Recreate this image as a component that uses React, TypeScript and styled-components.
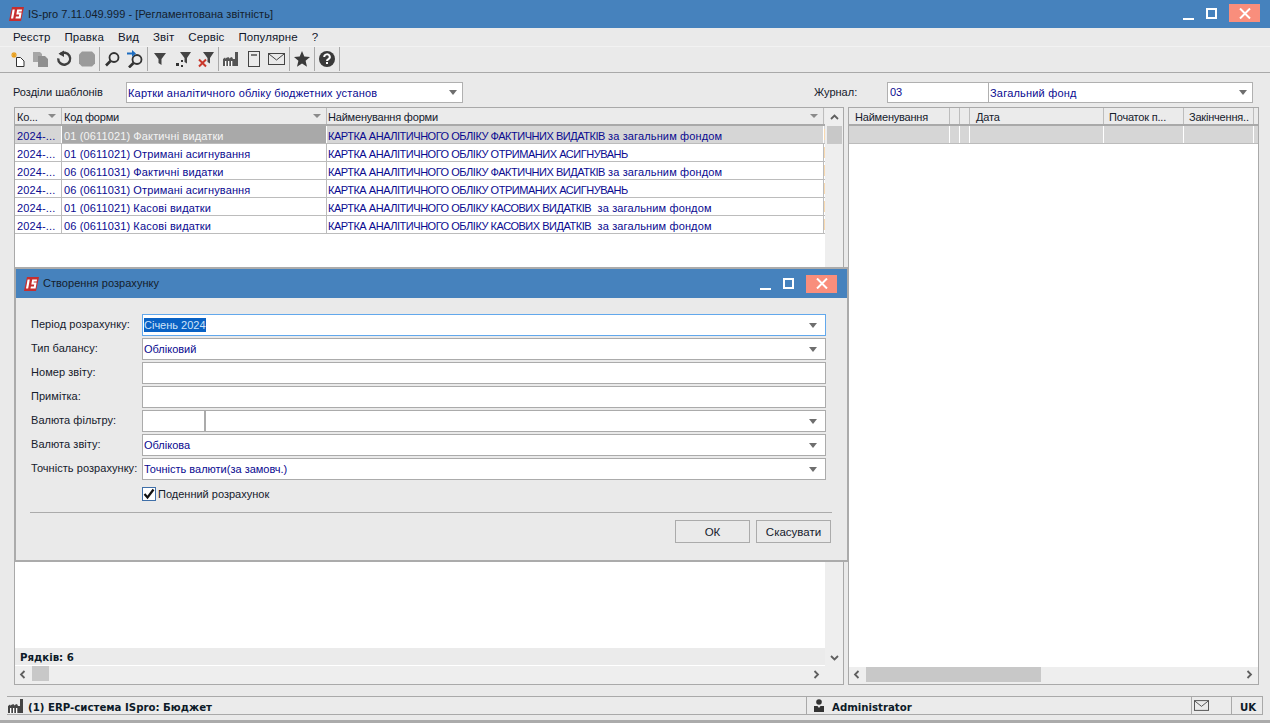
import React from 'react';
import styled, { createGlobalStyle } from 'styled-components';

const Global = createGlobalStyle`
  html, body { margin: 0; padding: 0; height: 100%; overflow: hidden; }
  body { font-family: "Liberation Sans", Arial, sans-serif; font-size: 11px; color: #111; background: #eaeaea; }
  #root { height: 723px; }
`;

const Page = styled.div`
  position: relative;
  width: 1270px;
  height: 723px;
  overflow: hidden;
  background: #eaeaea;
  display: flex;
  flex-direction: column;
`;

const TitleBar = styled.div<{ $h: number; $pl: number }>`
  height: ${p => p.$h}px;
  flex: none;
  background: #4682bd;
  display: flex;
  align-items: center;
  padding-left: ${p => p.$pl}px;
  font-size: 11px;
  letter-spacing: 0.05px;
  color: #14202c;
  white-space: nowrap;
`;

const TitleText = styled.span<{ $ml: number; $pb?: number }>`
  margin-left: ${p => p.$ml}px;
  padding-bottom: ${p => p.$pb ?? 0}px;
  flex: 1;
`;

const WinButtons = styled.div<{ $pb: number }>`
  display: flex;
  align-items: center;
  gap: 12px;
  padding-right: 10px;
  padding-bottom: ${p => p.$pb}px;
`;

const MinBtn = styled.span`
  width: 11px;
  height: 2px;
  margin-top: 11px;
  background: #fff;
`;

const MaxBtn = styled.span`
  width: 7px;
  height: 7px;
  border: 2px solid #fff;
`;

const CloseBtn = styled.span`
  width: 31px;
  height: 18px;
  background: #f98e7c;
  display: flex;
  align-items: center;
  justify-content: center;
`;

const MenuBar = styled.div`
  height: 18px;
  flex: none;
  display: flex;
  align-items: center;
  padding-left: 13px;
  gap: 14px;
  font-size: 11.5px;
  letter-spacing: 0.1px;
  color: #10162a;
`;

const Toolbar = styled.div`
  height: 26px;
  flex: none;
  display: flex;
  align-items: center;
  padding-left: 6px;
  box-shadow: inset 0 1px 0 #f2f2f2;
  border-bottom: 1px solid #a9a9a9;
`;

const ToolBtn = styled.span`
  width: 23px;
  height: 22px;
  flex: none;
  display: flex;
  align-items: center;
  justify-content: center;
`;

const ToolSep = styled.span`
  width: 1px;
  height: 24px;
  margin-left: 1px;
  flex: none;
  background: #a9a9a9;
`;

const FilterRow = styled.div`
  height: 30px;
  flex: none;
  display: flex;
  align-items: flex-end;
  padding: 0 17px 0 13px;
  box-sizing: border-box;
`;

const FilterLabel = styled.span<{ $w: number }>`
  width: ${p => p.$w}px;
  flex: none;
  height: 21px;
  line-height: 21px;
  font-size: 11px;
  color: #15202c;
`;

const Spacer = styled.span`
  flex: 1;
`;

const SelectBox = styled.div<{ $w: number }>`
  width: ${p => p.$w}px;
  height: 21px;
  box-sizing: border-box;
  flex: none;
  background: #fff;
  border: 1px solid #b0b0b0;
  display: flex;
  align-items: center;
  color: #0a0a90;
  font-size: 11px;
  padding-right: 5px;
`;

const SelectText = styled.span`
  flex: 1;
  padding-left: 1px;
  white-space: nowrap;
  letter-spacing: 0.2px;
`;

const CodeCell = styled.span`
  width: 101px;
  height: 100%;
  box-sizing: border-box;
  padding-left: 2px;
  line-height: 19px;
  border-right: 1px solid #b0b0b0;
  flex: none;
`;

const Arrow = styled.span`
  width: 0;
  height: 0;
  flex: none;
  border-left: 4px solid transparent;
  border-right: 4px solid transparent;
  border-top: 5px solid #6e6e6e;
`;

const Panels = styled.div`
  flex: 1;
  display: flex;
  gap: 4px;
  padding: 4px 12px 0 14px;
  min-height: 0;
`;

const Panel = styled.div<{ $w: number }>`
  width: ${p => p.$w}px;
  height: 578px;
  box-sizing: border-box;
  flex: none;
  border: 1px solid #a9a9a9;
  background: #fff;
  display: flex;
  flex-direction: column;
`;

const PanelMain = styled.div`
  flex: 1;
  display: flex;
  min-height: 0;
`;

const GridArea = styled.div`
  flex: 1;
  min-width: 0;
  display: flex;
  flex-direction: column;
`;

const Header = styled.div`
  height: 16px;
  flex: none;
  display: flex;
  background: #ebebeb;
  border-bottom: 2px solid #a9a9a9;
`;

const HeadCell = styled.div<{ $w: number; $pl?: number }>`
  width: ${p => p.$w}px;
  flex: none;
  box-sizing: border-box;
  display: flex;
  align-items: center;
  padding: 2px 5px 0 ${p => p.$pl ?? 2}px;
  border-right: 1px solid #bdbdbd;
  font-size: 11px;
  letter-spacing: -0.2px;
  color: #15202c;
  overflow: hidden;
  white-space: nowrap;
`;

const HeadLabel = styled.span`
  flex: 1;
`;

const SmallArrow = styled.span`
  width: 0;
  height: 0;
  margin-bottom: 2px;
  border-left: 4px solid transparent;
  border-right: 4px solid transparent;
  border-top: 4px solid #8a8a8a;
`;

const Row = styled.div<{ $bg?: string }>`
  height: 18px;
  box-sizing: border-box;
  flex: none;
  display: flex;
  border-bottom: 1px solid #bcbcbc;
  background: ${p => p.$bg ?? '#fff'};
`;

const Cell = styled.div<{ $w: number; $bg?: string; $fg?: string; $pl?: number; $sel?: boolean }>`
  width: ${p => p.$w}px;
  flex: none;
  box-sizing: border-box;
  padding-left: ${p => p.$pl ?? 2}px;
  line-height: 20px;
  font-size: 11px;
  letter-spacing: 0.13px;
  color: ${p => p.$fg ?? '#0a0a90'};
  background: ${p => p.$bg ?? '#fff'};
  border-right: 1px solid ${p => (p.$sel ? '#fff' : '#bcbcbc')};
  white-space: pre;
  overflow: hidden;
`;

const Caps = styled.span`
  letter-spacing: -0.47px;
`;

const MarkCell = styled.div`
  width: 1px;
  flex: none;
  margin: 3px 0;
  background: #f8d9b0;
`;

const EmptyGrid = styled.div`
  flex: 1;
`;

const Summary = styled.div`
  height: 18px;
  flex: none;
  background: #ebebeb;
  border-bottom: 1px solid #fff;
  padding-left: 5px;
  box-sizing: border-box;
  font-weight: bold;
  line-height: 19px;
  color: #0d1a28;
  font-family: "DejaVu Sans", sans-serif;
  font-size: 10.2px;
`;

const VScroll = styled.div`
  width: 18px;
  flex: none;
  margin-left: 0;
  background: #eeeeee;
  display: flex;
  flex-direction: column;
  align-items: center;
`;

const VThumb = styled.div`
  width: 15px;
  height: 18px;
  flex: none;
  background: #c8c8c8;
`;

const ScrollBtn = styled.div<{ $h?: number }>`
  height: ${p => p.$h ?? 15}px;
  width: 17px;
  flex: none;
  display: flex;
  align-items: center;
  justify-content: center;
`;

const HScroll = styled.div<{ $h: number }>`
  height: ${p => p.$h}px;
  flex: none;
  background: #eeeeee;
  display: flex;
  align-items: flex-start;
`;

const HThumb = styled.div<{ $w: number }>`
  width: ${p => p.$w}px;
  height: 15px;
  flex: none;
  background: #c8c8c8;
`;

const StatusBar = styled.div`
  height: 17px;
  flex: none;
  margin: 11px 7px 0 7px;
  display: flex;
  border-top: 1px solid #a9a9a9;
  border-bottom: 1px solid #a9a9a9;
  background: #ebebeb;
`;

const StatusCell = styled.div<{ $w?: number }>`
  ${p => (p.$w ? `width: ${p.$w}px; flex: none;` : 'flex: 1;')}
  box-sizing: border-box;
  display: flex;
  align-items: center;
  border-right: 1px solid #a9a9a9;
  font-family: "DejaVu Sans", sans-serif;
  font-weight: bold;
  font-size: 10.2px;
  color: #0d1a28;
  white-space: nowrap;
`;

const StatusText = styled.span<{ $ml: number }>`
  margin-left: ${p => p.$ml}px;
  padding-top: 3px;
`;

const IconSpacer = styled.span<{ $w: number }>`
  width: ${p => p.$w}px;
  flex: none;
`;

const BottomEdge = styled.div`
  height: 3px;
  margin-top: 5px;
  flex: none;
  background: #ababab;
`;

const Dialog = styled.div`
  position: absolute;
  left: 14px;
  top: 267px;
  width: 835px;
  height: 295px;
  box-sizing: border-box;
  border: 2px solid #ababab;
  background: #eaeaea;
  display: flex;
  flex-direction: column;
`;

const DialogBody = styled.div`
  flex: 1;
  padding: 16px 15px 0 15px;
  display: flex;
  flex-direction: column;
`;

const Form = styled.div`
  display: grid;
  grid-template-columns: 111px 684px;
  row-gap: 2px;
  align-items: stretch;
  color: #15202c;
`;

const FieldLabel = styled.label`
  font-size: 11px;
  height: 22px;
  line-height: 20px;
  white-space: nowrap;
  letter-spacing: 0.05px;
`;

const Field = styled.div<{ $focus?: boolean }>`
  height: 22px;
  box-sizing: border-box;
  border: 1px solid ${p => (p.$focus ? '#62a8ec' : '#ababab')};
  background: #fff;
  display: flex;
  align-items: center;
  padding-right: 8px;
  color: #0a0a90;
  font-size: 11px;
`;

const FieldText = styled.span`
  flex: 1;
  padding-left: 1px;
  white-space: nowrap;
`;

const Selected = styled.span`
  background: #0a62c4;
  color: #cfe4fa;
  padding: 1px 0;
`;

const CurrencyCode = styled.span`
  width: 63px;
  height: 100%;
  flex: none;
  box-sizing: border-box;
  border-right: 2px solid #ababab;
`;

const CheckRow = styled.div`
  display: flex;
  align-items: center;
  gap: 2px;
  margin: 6px 0 0 111px;
  height: 16px;
  font-size: 11px;
  color: #15202c;
`;

const CheckBox = styled.span`
  width: 14px;
  height: 14px;
  box-sizing: border-box;
  border: 1px solid #3f6fa8;
  background: #fff;
  display: flex;
  align-items: center;
  justify-content: center;
  flex: none;
`;

const Divider = styled.div`
  height: 1px;
  margin: 10px 0 0 -1px;
  background: #ababab;
`;

const ButtonRow = styled.div`
  display: flex;
  justify-content: flex-end;
  gap: 6px;
  margin-top: 7px;
  padding-right: 1px;
`;

const DlgButton = styled.button`
  width: 75px;
  height: 23px;
  box-sizing: border-box;
  border: 1px solid #ababab;
  background: #eaeaea;
  font-family: inherit;
  font-size: 11.5px;
  color: #15202c;
  padding: 0;
`;

const Logo = () => (
  <svg width="15" height="14" viewBox="0 0 15 14">
    <path d="M3 0H15L12 14H0Z" fill="#c62e2e" />
    <path d="M3.6 2.5H5.8L4.2 11.5H2Z" fill="#fff" />
    <path d="M13 2.5H8.2L7.3 7.6H10.2L9.9 9.4H6.9L6.5 11.5H11.6L12.6 5.6H9.6L9.8 4.4H12.7Z" fill="#fff" />
  </svg>
);

const CloseX = () => (
  <svg width="12" height="11" viewBox="0 0 12 11">
    <path d="M1 .5L11 10.5M11 .5L1 10.5" stroke="#fff" strokeWidth="2" />
  </svg>
);

const Chev = ({ dir }: { dir: 'l' | 'r' | 'u' | 'd' }) => {
  const d = { l: 'M5.5 1L2 4.5L5.5 8', r: 'M2.5 1L6 4.5L2.5 8', u: 'M1 6L4.5 2.5L8 6', d: 'M1 3L4.5 6.5L8 3' }[dir];
  return (
    <svg width="9" height="9" viewBox="0 0 9 9">
      <path d={d} fill="none" stroke="#5f5f5f" strokeWidth="1.8" />
    </svg>
  );
};

const Factory = ({ c = '#555' }: { c?: string }) => (
  <svg width="17" height="16" viewBox="0 0 17 16">
    <path d="M13 1H16V15H1V8L3 6.5L4 8V7L6.5 6L7.5 8V7L10 6L11 8H13Z" fill={c} />
    <path d="M3 10h1.3v5H3zM6 10h1.3v5H6zM9 10h1.3v5H9z" fill="#fff" />
  </svg>
);

const Mail = ({ w = 17, h = 12 }: { w?: number; h?: number }) => (
  <svg width={w} height={h} viewBox="0 0 17 12">
    <rect x=".5" y=".5" width="16" height="11" fill="none" stroke="#444" />
    <path d="M1 1L8.5 7L16 1" fill="none" stroke="#444" />
  </svg>
);

const IconNew = () => (
  <svg width="18" height="18" viewBox="0 0 18 18">
    <path d="M7.5 7.5H11.5L15 11V16.5H7.5Z" fill="#fff" stroke="#333" />
    <path d="M5 2V8M2 5H8M3 3L7 7M7 3L3 7" stroke="#e8a020" strokeWidth="1.2" />
  </svg>
);

const IconCopy = () => (
  <svg width="18" height="18" viewBox="0 0 18 18">
    <path d="M1 2H8L10 4V12H1Z" fill="#a6a6a6" />
    <path d="M6 6H13L16 9V17H6Z" fill="#8f8f8f" />
  </svg>
);

const IconRefresh = () => (
  <svg width="18" height="18" viewBox="0 0 18 18">
    <path d="M5 4.4A6 6 0 1 1 3.2 8.4" fill="none" stroke="#3f3f3f" strokeWidth="2.4" />
    <path d="M9 0.5V7L3.5 3.7Z" fill="#3f3f3f" />
  </svg>
);

const IconStop = () => (
  <svg width="18" height="18" viewBox="0 0 18 18">
    <path d="M4 1.5H14L17 4.5V13.5L14 16.5H4L1 13.5V4.5Z" fill="#9a9a9a" />
  </svg>
);

const IconSearch = ({ arrow }: { arrow?: boolean }) => (
  <svg width="18" height="18" viewBox="0 0 18 18">
    <circle cx="11" cy={arrow ? 9.5 : 7.5} r="4.5" fill="#eaeaea" stroke="#333" strokeWidth="1.8" />
    <path d={arrow ? 'M7.5 13L3 17.5' : 'M7.5 11L3 15.5'} stroke="#333" strokeWidth="2.6" />
    {arrow && <path d="M1 2.5H6V0L10 3.5L6 7V4.5H1Z" fill="#1c6cc0" />}
  </svg>
);

const IconFilter = ({ variant }: { variant?: 'add' | 'del' }) => (
  <svg width="18" height="18" viewBox="0 0 18 18">
    {variant ? (
      <path d="M6 2H17L13 8V13.5L10.5 12V8Z" fill="#444" />
    ) : (
      <path d="M3 3H15L10.5 9V15L7.5 13V9Z" fill="#444" />
    )}
    {variant === 'add' && <path d="M2 13h3v3H2zM7 10h2v2H7zM7 15h2v2H7z" fill="#333" />}
    {variant === 'del' && <path d="M2 9.5L9 16.5M9 9.5L2 16.5" stroke="#c8372a" strokeWidth="2" />}
  </svg>
);

const IconDoc = () => (
  <svg width="18" height="18" viewBox="0 0 18 18">
    <rect x="3.5" y="1.5" width="11" height="15" fill="#eaeaea" stroke="#444" />
    <path d="M6 5H12" stroke="#444" strokeWidth="1.4" />
  </svg>
);

const IconStar = () => (
  <svg width="18" height="18" viewBox="0 0 18 18">
    <path d="M9 1L11.3 6.6L17 7L12.6 10.8L14 16.8L9 13.6L4 16.8L5.4 10.8L1 7L6.7 6.6Z" fill="#3a3a3a" />
  </svg>
);

const IconHelp = () => (
  <svg width="18" height="18" viewBox="0 0 18 18">
    <circle cx="9" cy="9" r="8" fill="#3a3a3a" />
    <path d="M6.2 7A2.8 2.6 0 1 1 10.2 9.3C9.4 9.8 9 10 9 11" fill="none" stroke="#fff" strokeWidth="2" />
    <rect x="8" y="12" width="2" height="2" fill="#fff" />
  </svg>
);

const IconUser = () => (
  <svg width="12" height="13" viewBox="0 0 12 13">
    <circle cx="6" cy="3" r="2.8" fill="#333" />
    <path d="M1 7H4.5L6 9L7.5 7H11V13H1Z" fill="#333" />
  </svg>
);

const Check = () => (
  <svg width="12" height="12" viewBox="0 0 12 12">
    <path d="M1.5 6L4.5 9.5L10.5 1.5" fill="none" stroke="#111" strokeWidth="2.2" />
  </svg>
);

const menu = ['Реєстр', 'Правка', 'Вид', 'Звіт', 'Сервіс', 'Популярне', '?'];

const rows: [string, string, string][] = [
  ['01 (0611021) Фактичні видатки', 'КАРТКА АНАЛІТИЧНОГО ОБЛІКУ ФАКТИЧНИХ ВИДАТКІВ', ' за загальним фондом'],
  ['01 (0611021) Отримані асигнування', 'КАРТКА АНАЛІТИЧНОГО ОБЛІКУ ОТРИМАНИХ АСИГНУВАНЬ', ''],
  ['06 (0611031) Фактичні видатки', 'КАРТКА АНАЛІТИЧНОГО ОБЛІКУ ФАКТИЧНИХ ВИДАТКІВ', ' за загальним фондом'],
  ['06 (0611031) Отримані асигнування', 'КАРТКА АНАЛІТИЧНОГО ОБЛІКУ ОТРИМАНИХ АСИГНУВАНЬ', ''],
  ['01 (0611021) Касові видатки', 'КАРТКА АНАЛІТИЧНОГО ОБЛІКУ КАСОВИХ ВИДАТКІВ', '  за загальним фондом'],
  ['06 (0611031) Касові видатки', 'КАРТКА АНАЛІТИЧНОГО ОБЛІКУ КАСОВИХ ВИДАТКІВ', '  за загальним фондом'],
];

const rightCols: [string, number, number][] = [
  ['Найменування', 101, 6], ['', 10, 2], ['', 10, 2], ['Дата', 134, 6], ['Початок п...', 80, 5], ['Закінчення..', 70, 5],
];

export default function App() {
  return (
    <Page>
      <Global />
      <TitleBar $h={28} $pl={9}>
        <Logo />
        <TitleText $ml={4}>IS-pro 7.11.049.999 - [Регламентована звітність]</TitleText>
        <WinButtons $pb={2}>
          <MinBtn />
          <MaxBtn />
          <CloseBtn><CloseX /></CloseBtn>
        </WinButtons>
      </TitleBar>
      <MenuBar>{menu.map(m => <span key={m}>{m}</span>)}</MenuBar>
      <Toolbar>
        <ToolBtn><IconNew /></ToolBtn>
        <ToolBtn><IconCopy /></ToolBtn>
        <ToolBtn><IconRefresh /></ToolBtn>
        <ToolBtn><IconStop /></ToolBtn>
        <ToolSep />
        <ToolBtn><IconSearch /></ToolBtn>
        <ToolBtn><IconSearch arrow /></ToolBtn>
        <ToolSep />
        <ToolBtn><IconFilter /></ToolBtn>
        <ToolBtn><IconFilter variant="add" /></ToolBtn>
        <ToolBtn><IconFilter variant="del" /></ToolBtn>
        <ToolSep />
        <ToolBtn><Factory /></ToolBtn>
        <ToolBtn><IconDoc /></ToolBtn>
        <ToolBtn><Mail /></ToolBtn>
        <ToolSep />
        <ToolBtn><IconStar /></ToolBtn>
        <ToolSep />
        <ToolBtn><IconHelp /></ToolBtn>
        <ToolSep />
      </Toolbar>
      <FilterRow>
        <FilterLabel $w={113}>Розділи шаблонів</FilterLabel>
        <SelectBox $w={337}>
          <SelectText>Картки аналітичного обліку бюджетних установ</SelectText>
          <Arrow />
        </SelectBox>
        <Spacer />
        <FilterLabel $w={73}>Журнал:</FilterLabel>
        <SelectBox $w={366}>
          <CodeCell>03</CodeCell>
          <SelectText>Загальний фонд</SelectText>
          <Arrow />
        </SelectBox>
      </FilterRow>
      <Panels>
        <Panel $w={830}>
          <PanelMain>
            <GridArea>
              <Header>
                <HeadCell $w={47}><HeadLabel>Ко...</HeadLabel><SmallArrow /></HeadCell>
                <HeadCell $w={265}><HeadLabel>Код форми</HeadLabel><SmallArrow /></HeadCell>
                <HeadCell $w={497} $pl={1}><HeadLabel>Найменування форми</HeadLabel><SmallArrow /></HeadCell>
              </Header>
              {rows.map((r, i) => {
                const sel = i === 0;
                return (
                  <Row key={r[0]} $bg={sel ? '#d6d6d6' : undefined}>
                    <Cell $w={47} $sel={sel} $bg={sel ? '#d6d6d6' : undefined}>2024-...</Cell>
                    <Cell $w={265} $sel={sel} $bg={sel ? '#a9a9a9' : undefined} $fg={sel ? '#f4f4f4' : undefined}>{r[0]}</Cell>
                    <Cell $w={497} $pl={1} $sel={sel} $bg={sel ? '#d6d6d6' : undefined}><Caps>{r[1]}</Caps>{r[2]}</Cell>
                    <MarkCell />
                  </Row>
                );
              })}
              <EmptyGrid />
              <Summary>Рядків: 6</Summary>
              <HScroll $h={18}>
                <ScrollBtn $h={16}><Chev dir="l" /></ScrollBtn>
                <HThumb $w={17} />
                <Spacer />
                <ScrollBtn $h={16}><Chev dir="r" /></ScrollBtn>
              </HScroll>
            </GridArea>
            <VScroll>
              <ScrollBtn $h={18}><Chev dir="u" /></ScrollBtn>
              <VThumb />
              <Spacer />
              <ScrollBtn $h={18}><Chev dir="d" /></ScrollBtn>
              <ScrollBtn $h={18} />
            </VScroll>
          </PanelMain>
        </Panel>
        <Panel $w={411}>
          <GridArea>
            <Header>
              {rightCols.map(([t, w, pl], i) => (
                <HeadCell key={i} $w={w} $pl={pl}>{t && <HeadLabel>{t}</HeadLabel>}</HeadCell>
              ))}
            </Header>
            <Row $bg="#d6d6d6">
              {rightCols.map(([, w], i) => (
                <Cell key={i} $w={w} $sel $bg="#d6d6d6" />
              ))}
            </Row>
            <EmptyGrid />
            <HScroll $h={17}>
              <ScrollBtn><Chev dir="l" /></ScrollBtn>
              <HThumb $w={175} />
              <Spacer />
              <ScrollBtn><Chev dir="r" /></ScrollBtn>
            </HScroll>
          </GridArea>
        </Panel>
      </Panels>
      <StatusBar>
        <StatusCell>
          <Factory c="#444" />
          <StatusText $ml={4}>(1) ERP-система ISpro: Бюджет</StatusText>
        </StatusCell>
        <StatusCell $w={385}>
          <IconSpacer $w={6} />
          <IconUser />
          <StatusText $ml={7}>Administrator</StatusText>
        </StatusCell>
        <StatusCell $w={40}>
          <IconSpacer $w={2} />
          <Mail w={15} h={11} />
        </StatusCell>
        <StatusCell $w={31}>
          <StatusText $ml={8}>UK</StatusText>
        </StatusCell>
      </StatusBar>
      <BottomEdge />

      <Dialog>
        <TitleBar $h={29} $pl={8}>
          <Logo />
          <TitleText $ml={4} $pb={1}>Створення розрахунку</TitleText>
          <WinButtons $pb={0}>
            <MinBtn />
            <MaxBtn />
            <CloseBtn><CloseX /></CloseBtn>
          </WinButtons>
        </TitleBar>
        <DialogBody>
          <Form>
            <FieldLabel>Період розрахунку:</FieldLabel>
            <Field $focus><FieldText><Selected>Січень 2024</Selected></FieldText><Arrow /></Field>
            <FieldLabel>Тип балансу:</FieldLabel>
            <Field><FieldText>Обліковий</FieldText><Arrow /></Field>
            <FieldLabel>Номер звіту:</FieldLabel>
            <Field />
            <FieldLabel>Примітка:</FieldLabel>
            <Field />
            <FieldLabel>Валюта фільтру:</FieldLabel>
            <Field><CurrencyCode /><FieldText /><Arrow /></Field>
            <FieldLabel>Валюта звіту:</FieldLabel>
            <Field><FieldText>Облікова</FieldText><Arrow /></Field>
            <FieldLabel>Точність розрахунку:</FieldLabel>
            <Field><FieldText>Точність валюти(за замовч.)</FieldText><Arrow /></Field>
          </Form>
          <CheckRow>
            <CheckBox><Check /></CheckBox>
            <span>Поденний розрахунок</span>
          </CheckRow>
          <Divider />
          <ButtonRow>
            <DlgButton>ОК</DlgButton>
            <DlgButton>Скасувати</DlgButton>
          </ButtonRow>
        </DialogBody>
      </Dialog>
    </Page>
  );
}
